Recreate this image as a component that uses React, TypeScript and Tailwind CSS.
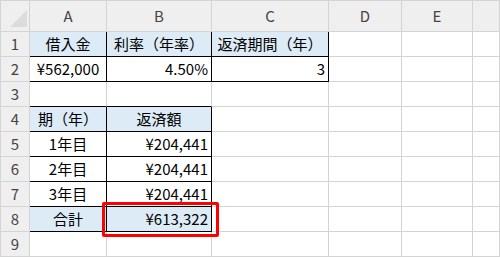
import React from "react";

const cols = ["A", "B", "C", "D", "E", ""];

type Cell = { text?: string; align?: "left" | "center" | "right"; fill?: boolean };

// 行ごとのセル内容 (A〜F)
const rows: Cell[][] = [
  [
    { text: "借入金", align: "center", fill: true },
    { text: "利率（年率）", align: "center", fill: true },
    { text: "返済期間（年）", align: "center", fill: true },
  ],
  [
    { text: "¥562,000", align: "center" },
    { text: "4.50%", align: "right" },
    { text: "3", align: "right" },
  ],
  [],
  [
    { text: "期（年）", align: "center", fill: true },
    { text: "返済額", align: "center", fill: true },
  ],
  [
    { text: "1年目", align: "center" },
    { text: "¥204,441", align: "right" },
  ],
  [
    { text: "2年目", align: "center" },
    { text: "¥204,441", align: "right" },
  ],
  [
    { text: "3年目", align: "center" },
    { text: "¥204,441", align: "right" },
  ],
  [
    { text: "合計", align: "center", fill: true },
    { text: "¥613,322", align: "right", fill: true },
  ],
  [],
];

// 罫線で囲まれた範囲
const boxed = (r: number, c: number) =>
  (r >= 0 && r <= 1 && c >= 0 && c <= 2) || (r >= 3 && r <= 7 && c >= 0 && c <= 1);

const alignClass = {
  left: "justify-start pl-[3px]",
  center: "justify-center",
  right: "justify-end pr-[3px]",
};

export default function App() {
  return (
    <div
      className="relative w-[500px] h-[257px] bg-white border-l border-t border-[#d4d4d4] overflow-hidden text-[15px] text-black"
      style={{ fontFamily: '"Noto Sans CJK JP", "Noto Sans", sans-serif' }}
    >
      <div className="grid grid-cols-[29px_77px_105px_117px_73px_71px_27px] grid-rows-[31px_repeat(9,25px)]">
        {/* 列見出し */}
        <div className="relative bg-[#efefef] border-r border-b border-[#d4d4d4]">
          <div className="absolute left-[9px] top-[9px] w-0 h-0 border-l-[17px] border-l-transparent border-b-[17px] border-b-[#dcdcdc]" />
        </div>
        {cols.map((c, i) => (
          <div
            key={i}
            className="flex items-center justify-center bg-[#efefef] border-r border-b border-[#d4d4d4] text-[#444] pt-[1px]"
          >
            {c}
          </div>
        ))}

        {rows.map((row, r) => (
          <React.Fragment key={r}>
            <div className="flex items-center justify-center bg-[#efefef] border-r border-b border-[#d4d4d4] text-[#444]">
              {r + 1}
            </div>
            {cols.map((_, c) => {
              const cell = row[c] || {};
              const rightBlack = boxed(r, c) || boxed(r, c + 1);
              const bottomBlack = boxed(r, c) || boxed(r + 1, c);
              return (
                <div
                  key={c}
                  className={`flex items-center whitespace-nowrap border-r border-b ${
                    rightBlack ? "border-r-black" : "border-r-[#d4d4d4]"
                  } ${bottomBlack ? "border-b-black" : "border-b-[#d4d4d4]"} ${
                    cell.fill ? "bg-[#ddebf7]" : "bg-white"
                  } ${alignClass[cell.align || "left"]}`}
                >
                  {cell.text}
                </div>
              );
            })}
          </React.Fragment>
        ))}
      </div>

      {/* 合計セルの強調枠 */}
      <div className="absolute left-[101px] top-[201px] w-[117px] h-[35px] border-[3px] border-[#ff0000] rounded-[2px]" />
    </div>
  );
}
